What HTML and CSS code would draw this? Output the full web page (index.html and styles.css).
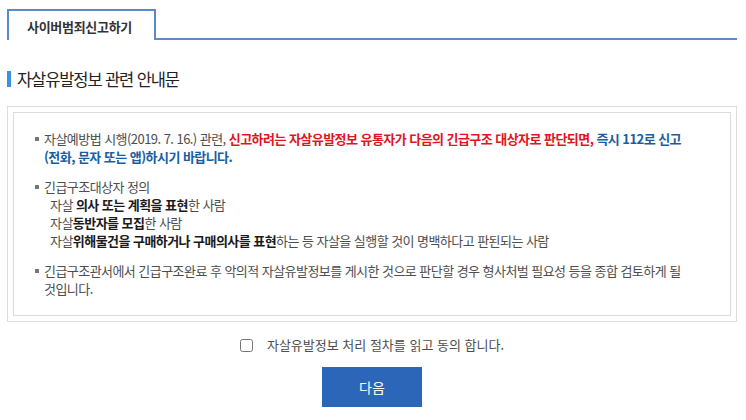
FILE: index.html
```html
<!DOCTYPE html>
<html lang="ko">
<head>
<meta charset="utf-8">
<title>자살유발정보 관련 안내문</title>
<link rel="stylesheet" href="styles.css">
</head>
<body>
<div class="page">
  <div class="tabs">
    <div class="tab">사이버범죄신고하기</div>
  </div>

  <h2 class="title">자살유발정보 관련 안내문</h2>

  <div class="box">
    <div class="inner">
      <ul class="notice">
        <li>자살예방법 시행(2019. 7. 16.) 관련, <strong class="red">신고하려는 자살유발정보 유통자가 다음의 긴급구조 대상자로 판단되면,</strong> <strong class="blue">즉시 112로 신고<br>(전화, 문자 또는 앱)하시기 바랍니다.</strong></li>
        <li>긴급구조대상자 정의
          <div class="sub">자살 <b>의사 또는 계획을 표현</b>한 사람</div>
          <div class="sub">자살<b>동반자를 모집</b>한 사람</div>
          <div class="sub">자살<b>위해물건을 구매하거나 구매의사를 표현</b>하는 등 자살을 실행할 것이 명백하다고 판된되는 사람</div>
        </li>
        <li>긴급구조관서에서 긴급구조완료 후 악의적 자살유발정보를 게시한 것으로 판단할 경우 형사처벌 필요성 등을 종합 검토하게 될<br>것입니다.</li>
      </ul>
    </div>
  </div>

  <div class="agree">
    <label class="agree-label"><input type="checkbox" class="check"><span>자살유발정보 처리 절차를 읽고 동의 합니다.</span></label>
  </div>

  <div class="actions">
    <button type="button" class="next">다음</button>
  </div>
</div>
</body>
</html>
```

FILE: styles.css
```css
* { box-sizing: border-box; }

html, body {
  margin: 0;
  padding: 0;
  background: #fff;
}

body {
  font-family: "Noto Sans CJK KR", "Noto Sans", sans-serif;
  color: #555;
  font-size: 13px;
}

.page {
  padding: 9px 9px 0 7px;
}

/* tabs */
.tabs {
  display: flex;
  height: 31px;
  border-bottom: 2px solid #5c8ac8;
}

.tab {
  width: 149px;
  height: 31px;
  border: 2px solid #5c8ac8;
  border-bottom: none;
  background: #fff;
  padding-top: 3px;
  padding-right: 4px;
  line-height: 26px;
  text-align: center;
  font-size: 13px;
  font-weight: 700;
  letter-spacing: -0.3px;
  color: #333;
}

/* heading */
.title {
  display: flex;
  align-items: center;
  gap: 6px;
  margin: 28px 0 16px;
  height: 22px;
  font-size: 16.5px;
  font-weight: 400;
  letter-spacing: -1.1px;
  color: #222;
  line-height: 22px;
}

.title::before {
  content: "";
  display: block;
  width: 4px;
  height: 16px;
  background: #3d8fe2;
}

/* notice box */
.box {
  border: 1px solid #dcdcdc;
  padding: 5px;
}

.inner {
  border: 1px solid #dcdcdc;
  padding: 17px 5px 17px 30px;
}

.notice {
  list-style: none;
  margin: 0;
  padding: 0;
  font-size: 13px;
  line-height: 18px;
  letter-spacing: -0.55px;
  color: #4d4d4d;
}

.notice li {
  position: relative;
  margin-bottom: 12px;
}

.notice li:last-child {
  margin-bottom: 0;
}

.notice li::before {
  content: "";
  position: absolute;
  left: -9px;
  top: 7px;
  width: 4px;
  height: 4px;
  background: #777;
}

.sub {
  padding-left: 6px;
}

.notice b {
  color: #1a1a1a;
  font-weight: 700;
}

.red {
  color: #e2141d;
  font-weight: 700;
}

.blue {
  color: #1a5e9e;
  font-weight: 700;
}

/* agree */
.agree {
  display: flex;
  justify-content: center;
  margin-top: 14px;
}

.agree-label {
  display: flex;
  align-items: center;
  gap: 14px;
  line-height: 18px;
  font-size: 13px;
  letter-spacing: 0;
  color: #4d4d4d;
}

.check {
  width: 13px;
  height: 13px;
  margin: 0;
}

/* button */
.actions {
  display: flex;
  justify-content: center;
  margin-top: 13px;
}

.next {
  width: 100px;
  height: 40px;
  border: none;
  background: #2b66b8;
  color: #fff;
  font-family: "Noto Sans CJK KR", "Noto Sans", sans-serif;
  font-size: 14px;
  cursor: pointer;
}
```
